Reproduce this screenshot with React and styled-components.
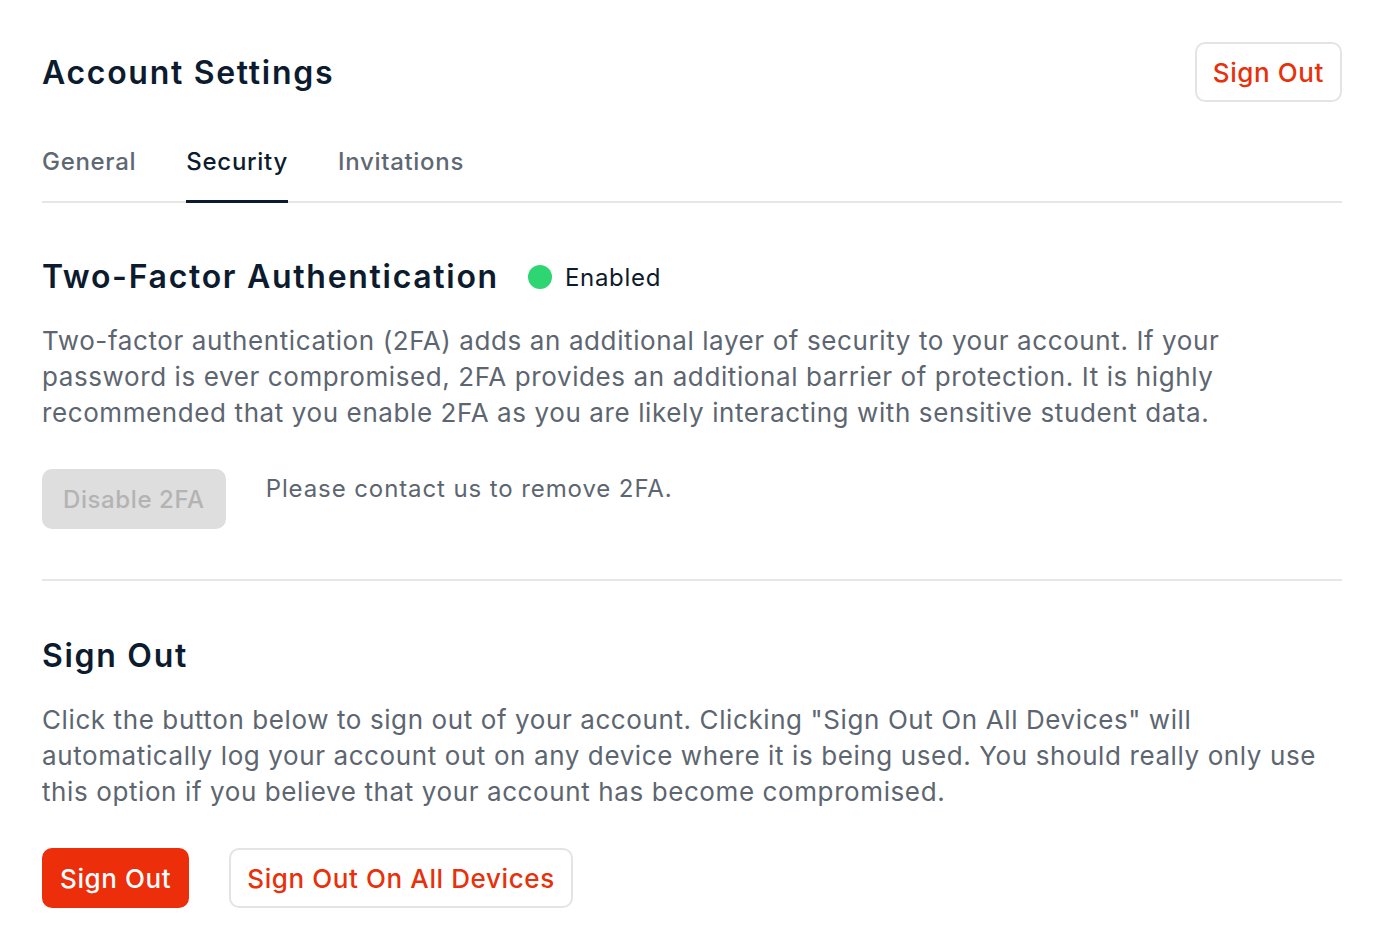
import React from "react";
import styled, { createGlobalStyle } from "styled-components";

const GlobalStyle = createGlobalStyle`
  body {
    margin: 0;
    background: #fff;
    font-family: Inter, "Noto Sans", sans-serif;
    color: #0d1b2e;
  }
`;

const Page = styled.div`
  padding: 42px 42px 40px;
`;

const Header = styled.header`
  display: flex;
  align-items: center;
  justify-content: space-between;
  height: 60px;
`;

const Title = styled.h1`
  margin: 0;
  font-size: 32px;
  font-weight: 600;
  letter-spacing: 1.7px;
  color: #0d1b2e;
`;

const Tabs = styled.nav`
  display: flex;
  gap: 50px;
  margin-top: 45px;
  border-bottom: 2px solid #e6e6e6;
`;

const Tab = styled.div`
  font-size: 24px;
  line-height: 30px;
  font-weight: 500;
  letter-spacing: 0.7px;
  padding-bottom: 23px;
  margin-bottom: -2px;
  color: ${(p) => (p.$active ? "#0d1b2e" : "#5f6872")};
  border-bottom: 3px solid ${(p) => (p.$active ? "#0d1b2e" : "transparent")};
`;

const Section = styled.section`
  padding: ${(p) => p.$top}px 0 0;
`;

const HeadingRow = styled.div`
  display: flex;
  align-items: center;
  gap: 29px;
  height: 40px;
`;

const Heading = styled.h2`
  margin: 0;
  font-size: 32px;
  line-height: 40px;
  font-weight: 600;
  letter-spacing: 1.7px;
  color: #0d1b2e;
`;

const Status = styled.div`
  display: flex;
  align-items: center;
  gap: 13px;
  font-size: 24px;
  letter-spacing: 0.7px;
  color: #0d1b2e;
`;

const Dot = styled.span`
  width: 24px;
  height: 24px;
  border-radius: 50%;
  background: #2ed573;
`;

const Text = styled.p`
  margin: 26px 0 0;
  font-size: 26px;
  line-height: 36px;
  letter-spacing: 0.6px;
  color: #5d6670;
`;

const Actions = styled.div`
  display: flex;
  align-items: flex-start;
  gap: 40px;
  margin-top: 38px;
`;

const Button = styled.button`
  height: 60px;
  padding: 0 16px;
  border-radius: 10px;
  font-family: inherit;
  font-size: 26px;
  font-weight: 500;
  letter-spacing: 0.6px;
  cursor: pointer;
  border: 2px solid transparent;
  ${(p) =>
    p.$variant === "primary" &&
    `background: #ec2f0a; color: #fff; border-color: #ec2f0a;`}
  ${(p) =>
    p.$variant === "outline" &&
    `background: #fff; color: #e8300a; border-color: #e4e4e4;`}
  ${(p) =>
    p.$variant === "disabled" &&
    `background: #dedede; color: #b3b3b3; border-color: #dedede; cursor: default;
     padding: 0 19px; font-size: 24px;`}
`;

const Note = styled.span`
  font-size: 24px;
  line-height: 40px;
  letter-spacing: 0.9px;
  color: #5d6670;
`;

const Divider = styled.hr`
  margin: 50px 0 0;
  border: 0;
  border-top: 2px solid #e6e6e6;
`;

export default function App() {
  return (
    <>
      <GlobalStyle />
      <Page>
        <Header>
          <Title>Account Settings</Title>
          <Button $variant="outline">Sign Out</Button>
        </Header>
        <Tabs>
          <Tab>General</Tab>
          <Tab $active>Security</Tab>
          <Tab>Invitations</Tab>
        </Tabs>

        <Section $top={54}>
          <HeadingRow>
            <Heading>Two-Factor Authentication</Heading>
            <Status>
              <Dot />
              Enabled
            </Status>
          </HeadingRow>
          <Text>
            Two-factor authentication (2FA) adds an additional layer of security to your account. If your
            <br />
            password is ever compromised, 2FA provides an additional barrier of protection. It is highly
            <br />
            recommended that you enable 2FA as you are likely interacting with sensitive student data.
          </Text>
          <Actions>
            <Button $variant="disabled" disabled>
              Disable 2FA
            </Button>
            <Note>Please contact us to remove 2FA.</Note>
          </Actions>
        </Section>

        <Divider />

        <Section $top={55}>
          <HeadingRow>
            <Heading>Sign Out</Heading>
          </HeadingRow>
          <Text>
            Click the button below to sign out of your account. Clicking "Sign Out On All Devices" will
            <br />
            automatically log your account out on any device where it is being used. You should really only use
            <br />
            this option if you believe that your account has become compromised.
          </Text>
          <Actions>
            <Button $variant="primary">Sign Out</Button>
            <Button $variant="outline">Sign Out On All Devices</Button>
          </Actions>
        </Section>
      </Page>
    </>
  );
}
